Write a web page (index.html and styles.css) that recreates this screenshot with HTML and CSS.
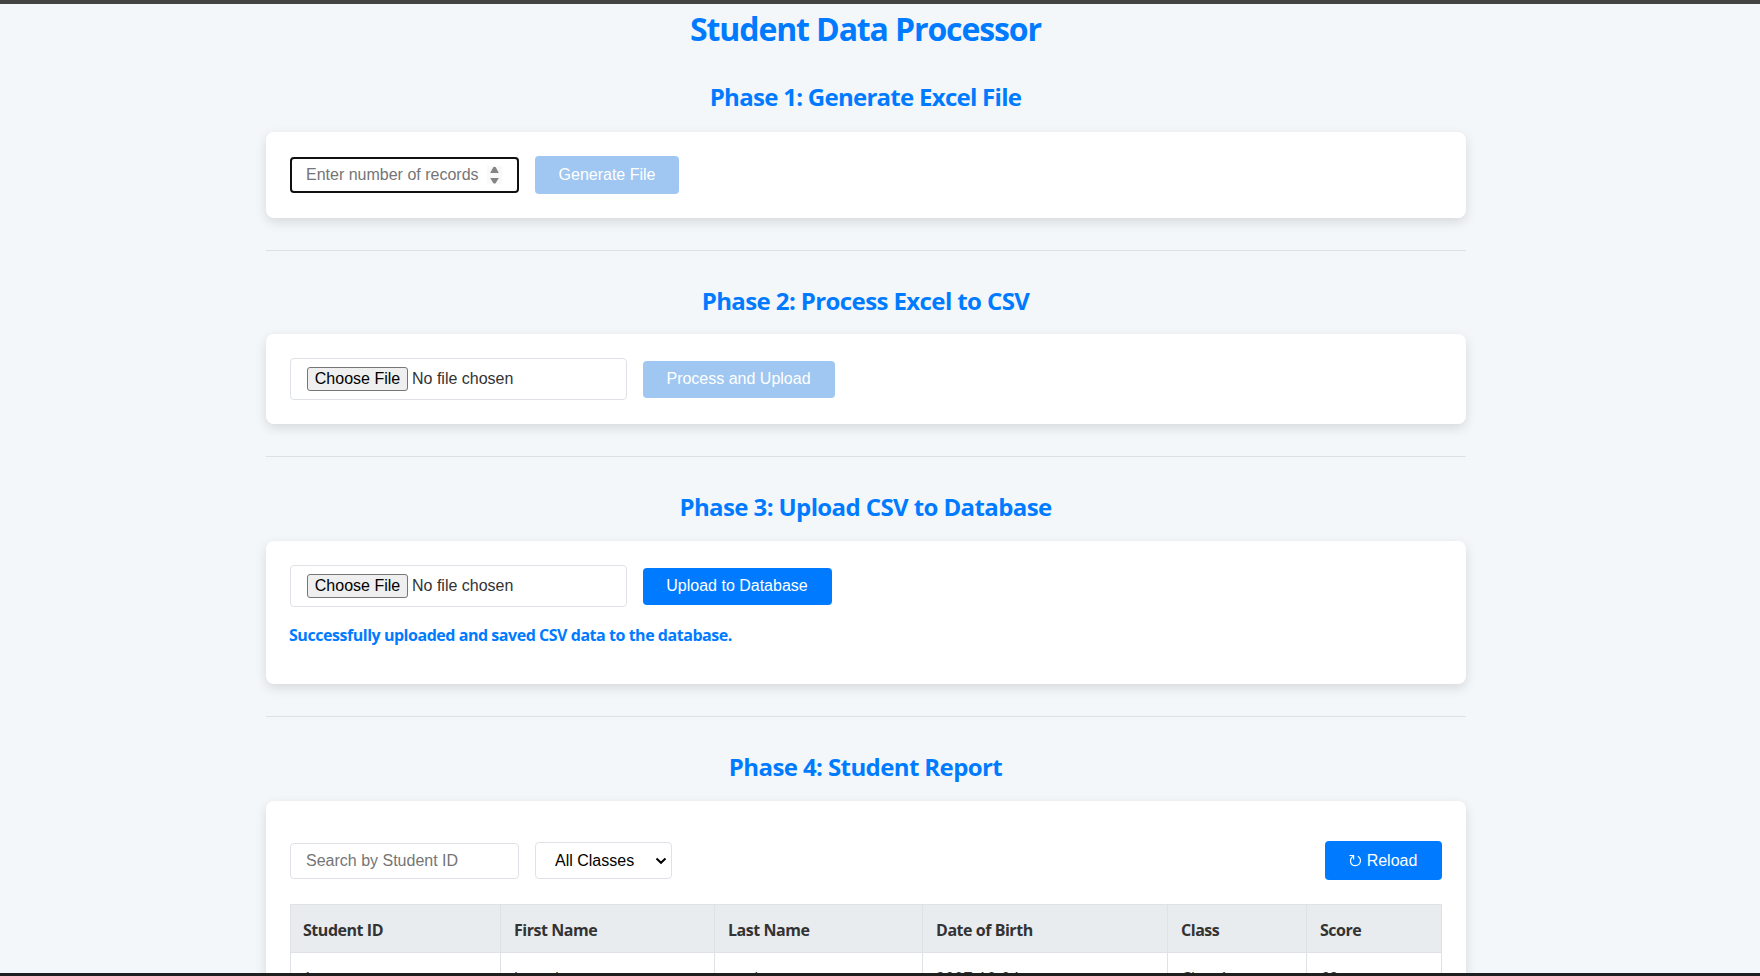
FILE: index.html
```html
<!DOCTYPE html>
<html lang="en">
<head>
<meta charset="utf-8">
<title>Student Data Processor</title>
<link rel="stylesheet" href="styles.css">
</head>
<body>
<div class="topbar"></div>
<main class="page">
  <h1 class="title">Student Data Processor</h1>
  <h2 class="phase p1">Phase 1: Generate Excel File</h2>
  <section class="card row c1">
    <div class="input focused"><span>Enter number of records</span>
      <svg class="spin" width="15" height="18" viewBox="0 0 15 18"><rect width="15" height="18" fill="#f9f9f9"/><path d="M3.2 7 L6.2 1.3 Q7.5 .2 8.8 1.3 L11.8 7Z M3.2 12 L6.2 17 Q7.5 18 8.8 17 L11.8 12Z" fill="#858585"/></svg>
    </div>
    <button class="btn off gen">Generate File</button>
  </section>
  <hr class="rule">
  <h2 class="phase p2">Phase 2: Process Excel to CSV</h2>
  <section class="card row c2">
    <div class="file"><span class="choose">Choose File</span><span>No file chosen</span></div>
    <button class="btn off proc">Process and Upload</button>
  </section>
  <hr class="rule">
  <h2 class="phase p3">Phase 3: Upload CSV to Database</h2>
  <section class="card c3">
    <div class="row">
      <div class="file"><span class="choose">Choose File</span><span>No file chosen</span></div>
      <button class="btn up">Upload to Database</button>
    </div>
    <p class="msg">Successfully uploaded and saved CSV data to the database.</p>
  </section>
  <hr class="rule">
  <h2 class="phase p4">Phase 4: Student Report</h2>
  <section class="card c4">
    <div class="row tools">
      <div class="input"><span>Search by Student ID</span></div>
      <div class="select"><span>All Classes</span><svg width="12" height="8" viewBox="0 0 12 8"><path d="M1.5 1.5 L6 5.8 L10.5 1.5" fill="none" stroke="#000" stroke-width="2"/></svg></div>
      <button class="btn reload"><svg width="13" height="13" viewBox="0 0 13 13"><path d="M.5 1.5H4.6V5.4 M4.3 2.2C-.2 5.2 1 11.6 6.4 11.6C11.8 11.6 13.2 5 8.8 2.2" fill="none" stroke="#fff" stroke-width="1.2"/></svg>Reload</button>
    </div>
    <table class="table">
      <colgroup><col class="k1"><col class="k2"><col class="k3"><col class="k4"><col class="k5"><col class="k6"></colgroup>
      <thead><tr><th>Student ID</th><th>First Name</th><th>Last Name</th><th>Date of Birth</th><th>Class</th><th>Score</th></tr></thead>
      <tbody><tr><td>1</td><td>based</td><td>sank</td><td>2007-10-04</td><td>Class1</td><td>69</td></tr></tbody>
    </table>
  </section>
</main>
<div class="bottombar"></div>
</body>
</html>
```
FILE: styles.css
```css
* { box-sizing: border-box; }
body {
  margin: 0;
  height: 976px;
  overflow: hidden;
  background: #f3f7fa;
  color: #333;
  font-family: "Open Sans", "Noto Sans", sans-serif;
  font-size: 16px;
}
.topbar { height: 4px; background: #424441; }
.bottombar { position: fixed; left: 0; right: 0; top: 973px; height: 3px; background: #1f1f1f; }
.page { width: 1200px; margin-left: 266px; }
.title, .phase { margin: 0; color: #007bff; text-align: center; font-weight: 700; white-space: nowrap; padding-right: 1px; }
.title { font-size: 32px; line-height: 50px; height: 48px; letter-spacing: -1.12px; }
.phase { font-size: 24px; line-height: 36px; height: 84px; padding-top: 32px; letter-spacing: -0.6px; }
.p1 { height: 80px; padding-top: 27px; letter-spacing: -0.72px; }
.p2 { height: 83px; }
.card { background: #fff; border-radius: 8px; padding: 24px; box-shadow: 0 4px 12px rgba(0, 0, 0, .12); }
.row { display: flex; align-items: center; gap: 16px; }
.c1 { height: 86px; }
.c2 { height: 90px; }
.c3 { height: 143px; }
.c4 { height: 300px; padding-top: 40px; }
.rule { margin: 32px 0 0; border: 0; height: 1px; background: #dce1e5; }
.input, .file, .btn, .select { font-family: "Liberation Sans", Arial, sans-serif; font-size: 16px; line-height: 18px; white-space: nowrap; }
.input { width: 229px; height: 36px; padding: 0 16px 0 15px; border: 1px solid #dee2e6; border-radius: 4px; display: flex; align-items: center; justify-content: space-between; color: #757575; background: #fff; }
.focused { border: 2px solid #101010; padding: 0 15px 0 14px; }
.file { width: 337px; height: 42px; padding: 0 16px; border: 1px solid #dee2e6; border-radius: 4px; display: flex; align-items: center; gap: 4px; }
.choose { width: 101px; height: 24px; line-height: 22px; border: 1px solid #767676; border-radius: 3px; background: #efefef; color: #000; text-align: center; }
.btn { border: 0; border-radius: 4px; padding: 0 1px 0 0; height: 37px; background: #007bff; color: #fff; }
.off { background: #a0c7f1; }
.gen { width: 144px; height: 38px; padding: 0; }
.proc { width: 192px; }
.up { width: 189px; }
.msg { margin: 16px 0 0 -1px; font-size: 16px; line-height: 24px; font-weight: 700; color: #007bff; white-space: nowrap; letter-spacing: -0.46px; }
.tools { height: 39px; margin-bottom: 24px; }
.select { width: 137px; height: 37px; border: 1px solid #dee2e6; border-radius: 4px; padding: 0 4px 0 19px; color: #000; display: flex; align-items: center; justify-content: space-between; }
.reload { width: 117px; height: 39px; margin-left: auto; display: flex; align-items: center; justify-content: center; gap: 5px; }
.table { width: 1151px; table-layout: fixed; border-collapse: collapse; font-size: 16px; }
.table th, .table td { height: 48px; padding: 0 12px; border: 1px solid #dee2e6; text-align: left; line-height: 24px; white-space: nowrap; }
.table th { background: #e9ecef; letter-spacing: -0.46px; padding-top: 2px; }
.table th + th, .table td + td { padding-left: 13px; }
.table td { padding-top: 2px; }
.k1 { width: 210px; }
.k2 { width: 214px; }
.k3 { width: 208px; }
.k4 { width: 245px; }
.k5 { width: 139px; }
.k6 { width: 135px; }
```
